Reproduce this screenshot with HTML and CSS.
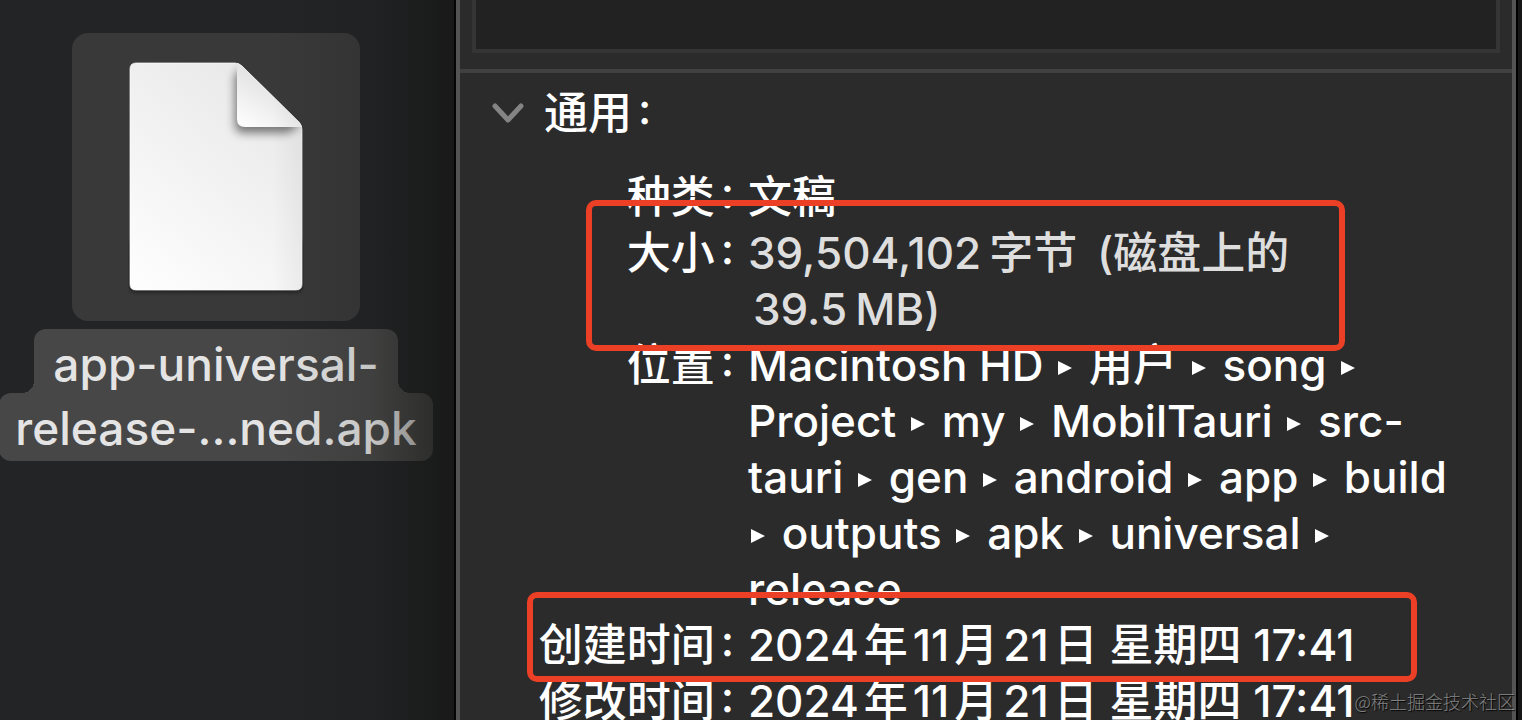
FILE: index.html
```html
<!DOCTYPE html>
<html lang="zh-CN">
<head>
<meta charset="utf-8">
<title>app-universal-release 简介</title>
<link rel="stylesheet" href="styles.css">
</head>
<body>
<svg class="defs" aria-hidden="true">
  <symbol id="arrow" viewBox="0 0 14 14"><path d="M0 0 14 7 0 14Z" fill="currentColor"/></symbol>
</svg>
<main class="desktop">
  <section class="files">
    <figure class="file">
      <div class="file-tile">
        <svg class="file-icon" viewBox="0 0 176 236" aria-hidden="true">
          <defs>
            <linearGradient id="paper" x1="0.2" y1="1" x2="0.8" y2="0">
              <stop offset="0" stop-color="#fdfdfd"/>
              <stop offset="1" stop-color="#e7e7e7"/>
            </linearGradient>
            <linearGradient id="fold" x1="0.2" y1="1" x2="0.55" y2="0.4">
              <stop offset="0" stop-color="#fcfcfc"/>
              <stop offset="1" stop-color="#e4e4e4"/>
            </linearGradient>
            <clipPath id="sheet"><path d="M8 2H107Q111 2 114 5L171 61Q174 64 174 69V223Q174 229 168 229H8Q2 229 2 223V8Q2 2 8 2Z"/></clipPath>
            <filter id="soft" x="-30%" y="-30%" width="160%" height="160%"><feGaussianBlur stdDeviation="5"/></filter>
            <filter id="drop" x="-10%" y="-10%" width="120%" height="120%"><feGaussianBlur stdDeviation="2"/></filter>
          </defs>
          <path d="M2 180H174V225Q174 231 168 231H8Q2 231 2 225Z" fill="#000" opacity=".5" filter="url(#drop)"/>
          <g clip-path="url(#sheet)">
            <path d="M0 0H176V236H0Z" fill="url(#paper)"/>
            <path d="M107 14V64Q107 72 116 72H160L172 64 114 8Z" fill="#000" opacity=".5" filter="url(#soft)"/>
            <path d="M109 2V58Q109 66 117 66H176V60L116 0Z" fill="url(#fold)"/>
          </g>
          <path d="M8 2H107Q111 2 114 5L171 61Q174 64 174 69V223Q174 229 168 229H8Q2 229 2 223V8Q2 2 8 2Z" fill="none" stroke="#fff" stroke-opacity=".7"/>
        </svg>
      </div>
      <figcaption class="file-name">
        <span class="name-line name-top">app-universal-</span>
        <span class="name-line name-bottom">release-...ned.apk</span>
      </figcaption>
    </figure>
  </section>
  <section class="info">
    <div class="preview"><div class="well"></div></div>
    <div class="general">
      <h2 class="heading">
        <svg class="chevron" viewBox="0 0 32 22" aria-hidden="true"><path d="M3 4 16 18 29 4" fill="none" stroke="#848484" stroke-width="5" stroke-linecap="round" stroke-linejoin="round"/></svg>
        <span>通用<span class="colon">:</span></span>
      </h2>
      <dl class="details">
        <dt>种类<span class="colon">:</span></dt>
        <dd>文稿</dd>
        <dt>大小<span class="colon">:</span></dt>
        <dd class="muted">39,504,102<span class="gap"></span>字节<span class="gap"></span> (磁盘上的<br><span class="thin"></span>39.5<span class="gap"></span>MB)</dd>
        <dt>位置<span class="colon">:</span></dt>
        <dd>Macintosh HD <svg class="arrow"><use href="#arrow"/></svg> 用户 <svg class="arrow"><use href="#arrow"/></svg> song <svg class="arrow"><use href="#arrow"/></svg><br>Project <svg class="arrow"><use href="#arrow"/></svg> my <svg class="arrow"><use href="#arrow"/></svg> MobilTauri <svg class="arrow"><use href="#arrow"/></svg> src-<br>tauri <svg class="arrow"><use href="#arrow"/></svg> gen <svg class="arrow"><use href="#arrow"/></svg> android <svg class="arrow"><use href="#arrow"/></svg> app <svg class="arrow"><use href="#arrow"/></svg> build<br><svg class="arrow"><use href="#arrow"/></svg> outputs <svg class="arrow"><use href="#arrow"/></svg> apk <svg class="arrow"><use href="#arrow"/></svg> universal <svg class="arrow"><use href="#arrow"/></svg><br>release</dd>
        <dt>创建时间<span class="colon">:</span></dt>
        <dd>2024<span class="thin"></span>年<span class="thin"></span>11<span class="thin"></span>月<span class="thin"></span>21<span class="thin"></span>日 星期四 17:41</dd>
        <dt>修改时间<span class="colon">:</span></dt>
        <dd>2024<span class="thin"></span>年<span class="thin"></span>11<span class="thin"></span>月<span class="thin"></span>21<span class="thin"></span>日 星期四 17:41</dd>
      </dl>
    </div>
    <div class="mark mark-size"></div>
    <div class="mark mark-created"></div>
  </section>
  <div class="edge"></div>
  <span class="watermark">@稀土掘金技术社区</span>
</main>
</body>
</html>
```
FILE: styles.css
```css
* { box-sizing: border-box; }

body {
  margin: 0;
  background: #111;
  color: #fff;
  font-family: Inter, "Noto Sans CJK SC", sans-serif;
  font-weight: 500;
}

.defs { position: absolute; width: 0; height: 0; }

.desktop {
  position: relative;
  display: grid;
  grid-template-columns: 456fr 1060fr 6fr;
  height: 100vh;
  overflow: hidden;
}

/* Desktop column with the selected file */
.files {
  position: relative;
  min-width: 0;
  padding: 33px 24px 0 0;
  background: #232426;
}

.files::after {
  content: "";
  position: absolute;
  inset: 0;
  border-right: 2px solid #060606;
  background: linear-gradient(to right, transparent 60%, rgba(20, 20, 18, .15) 82%, rgba(18, 18, 16, .6));
}

.file {
  display: flex;
  flex-direction: column;
  align-items: center;
  gap: 8px;
  margin: 0;
}

.file-tile {
  display: flex;
  justify-content: center;
  width: 288px;
  height: 288px;
  padding-top: 28px;
  border-radius: 16px;
  background: #393939;
}

.file-icon { width: 176px; height: 236px; }

.file-name {
  display: flex;
  flex-direction: column;
  align-items: center;
  color: #e4e4e4;
  font-size: 46px;
  white-space: nowrap;
}

.name-line {
  position: relative;
  padding: 0 16px;
  background: #474747;
}

.name-top {
  height: 64px;
  padding: 0 19px;
  line-height: 70px;
  border-radius: 12px 12px 0 0;
}

.name-top::before,
.name-top::after {
  content: "";
  position: absolute;
  bottom: 0;
  width: 12px;
  height: 12px;
}

.name-top::before {
  right: 100%;
  background: radial-gradient(circle at 0 0, transparent 12px, #474747 12px);
}

.name-top::after {
  left: 100%;
  background: radial-gradient(circle at 100% 0, transparent 12px, #474747 12px);
}

.name-bottom {
  height: 68px;
  line-height: 70px;
  border-radius: 12px;
}

/* Info window */
.info {
  position: relative;
  min-width: 0;
  border: solid #545454;
  border-width: 0 4px;
  background: #2b2b2b;
}

.preview {
  height: 73px;
  padding: 0 12px;
  border-bottom: 4px solid #404040;
}

.well {
  height: 53px;
  border: solid #353535;
  border-width: 0 4px 4px;
  background: #222;
}

.heading {
  display: flex;
  align-items: center;
  gap: 20px;
  margin: 0;
  padding: 12px 32px 0;
  font-size: 44px;
  font-weight: 500;
  line-height: 56px;
}

.chevron { width: 32px; height: 22px; }

.details {
  display: grid;
  grid-template-columns: 274px 1fr;
  column-gap: 14px;
  margin: 0;
  padding-top: 28px;
  font-size: 44px;
  line-height: 56px;
}

.details dt { text-align: right; white-space: nowrap; }
.details dd { margin: 0; white-space: nowrap; }
.details .muted { color: #dedede; }

.colon { margin-left: 6px; font-feature-settings: "case"; }
.thin { display: inline-block; width: 5px; }
.gap { display: inline-block; width: 8px; }

.arrow { width: 14px; height: 14px; margin: 0 5px 0 3px; vertical-align: 6px; }

/* Highlight frames drawn over the window */
.mark {
  position: absolute;
  border: 6px solid #eb4025;
  border-radius: 10px;
}

.mark-size { top: 200px; left: 126px; width: 759px; height: 151px; }
.mark-created { top: 592px; left: 67px; width: 890px; height: 90px; }

.edge { border-left: 2px solid #000; background: #161616; }

.watermark {
  position: absolute;
  right: 7px;
  bottom: 5px;
  color: rgba(255, 255, 255, .45);
  font-family: "Noto Sans CJK SC", sans-serif;
  font-size: 18px;
  font-weight: 300;
  line-height: 28px;
  text-shadow: 1px 1px 1px #000;
}
```
